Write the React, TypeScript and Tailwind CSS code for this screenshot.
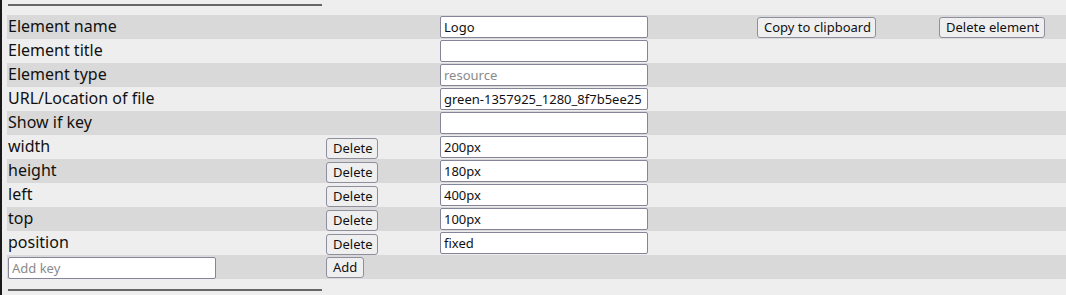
import React from "react";

// linhas de propriedades do elemento
type Row = {
  label: string;
  value: string;
  placeholder?: string;
  removable?: boolean;
};

const rows: Row[] = [
  { label: "Element name", value: "Logo" },
  { label: "Element title", value: "" },
  { label: "Element type", value: "", placeholder: "resource" },
  { label: "URL/Location of file", value: "green-1357925_1280_8f7b5ee25" },
  { label: "Show if key", value: "" },
  { label: "width", value: "200px", removable: true },
  { label: "height", value: "180px", removable: true },
  { label: "left", value: "400px", removable: true },
  { label: "top", value: "100px", removable: true },
  { label: "position", value: "fixed", removable: true },
];

const inputCls =
  "w-[208px] h-[22px] bg-white border border-[#85859a] rounded-[2px] px-[3px] text-[13px] text-[#111] placeholder:text-[#8a8a8a] outline-none";
const btnCls =
  "h-[21px] bg-[#efefef] border border-[#8e8e9e] rounded-[3px] px-[6px] text-[13px] text-[#111] leading-none whitespace-nowrap";

export default function App() {
  return (
    <div
      className="h-[295px] w-[1066px] bg-[#eeeeee] border-l-2 border-[#1a1a1a] flex flex-col text-[#111]"
      style={{ fontFamily: '"Noto Sans", "Open Sans", sans-serif' }}
    >
      {/* linha separadora superior */}
      <div className="mt-[4px] ml-[6px] w-[314px] h-[2px] bg-[#666666]" />

      <div className="mt-[9px] ml-[5px] flex flex-col">
        {rows.map((row, i) => (
          <div
            key={row.label}
            className={`h-[24px] flex items-center ${i % 2 === 0 ? "bg-[#d9d9d9]" : ""}`}
          >
            <div className="w-[319px] pl-[1px] text-[16px] leading-none -mt-[2px]">{row.label}</div>
            <div className="w-[114px]">
              {row.removable && <button className={`${btnCls} w-[52px] px-0`}>Delete</button>}
            </div>
            <input
              readOnly
              className={inputCls}
              value={row.value}
              placeholder={row.placeholder}
            />
            {i === 0 && (
              <>
                <button className={`${btnCls} ml-[109px] w-[119px] px-0`}>Copy to clipboard</button>
                <button className={`${btnCls} ml-[63px] w-[106px] px-0`}>Delete element</button>
              </>
            )}
          </div>
        ))}

        {/* linha para adicionar nova chave */}
        <div className="h-[24px] flex items-center bg-[#d9d9d9]">
          <div className="w-[319px] pl-[1px]">
            <input readOnly className={inputCls} placeholder="Add key" />
          </div>
          <button className={btnCls}>Add</button>
        </div>
      </div>

      {/* linha separadora inferior */}
      <div className="mt-[10px] ml-[6px] w-[314px] h-[2px] bg-[#666666]" />
    </div>
  );
}
